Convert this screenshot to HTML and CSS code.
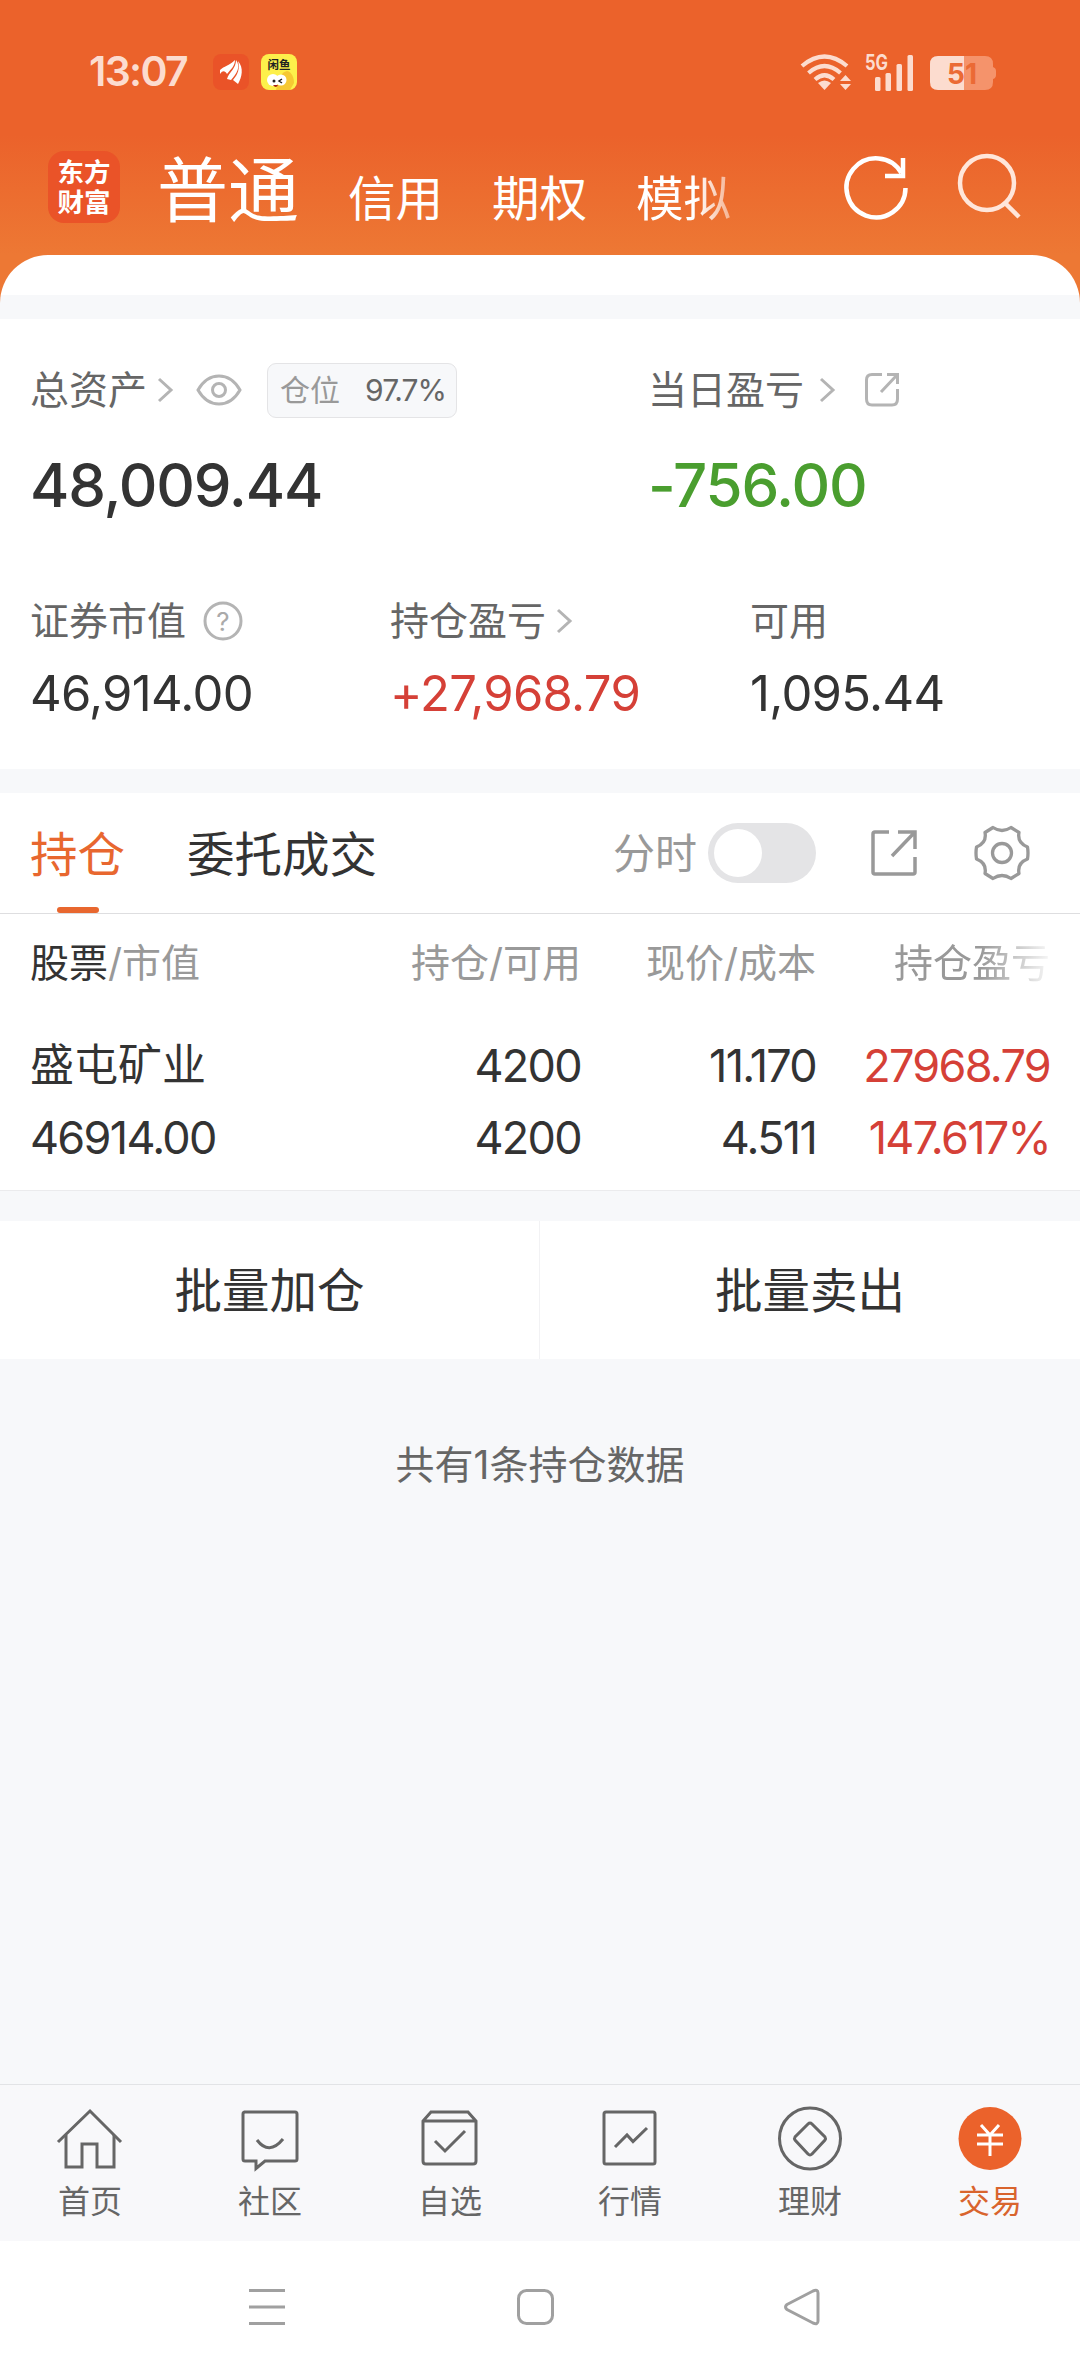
FILE: index.html
```html
<!DOCTYPE html>
<html lang="zh-CN">
<head>
    <meta charset="UTF-8">
    <meta name="viewport" content="width=device-width, initial-scale=1.0">
    <title>交易</title>
    <link rel="stylesheet" href="styles.css">
</head>
<body>
    <header class="top">
        <div class="status">
            <span class="time">13:07</span>
            <svg class="app-icon" width="36" height="36" viewBox="0 0 36 36">
                <rect width="36" height="36" rx="8" fill="#ea5328"/>
                <path d="M7 16C11 12 16 12 22 6C22 12 18 15 14 20C12 17 10 16 7 20Z" fill="#fff"/>
                <path d="M14 25C16 18 23 15 23 6C28 13 24 19 18 26Z" fill="#fff"/>
                <path d="M25 7C31 14 29 23 25 30L20 26C25 20 27 15 25 7Z" fill="#fff"/>
            </svg>
            <svg class="app-icon" width="36" height="36" viewBox="0 0 36 36">
                <rect width="36" height="36" rx="8" fill="#fdf04b"/>
                <path d="M15 36C18 25 20 18 26 17C31 18 33 24 33 29L29 36Z" fill="#f6c833"/>
                <circle cx="12" cy="26" r="6" fill="#fff"/>
                <circle cx="20" cy="26" r="5.500" fill="#fff"/>
                <circle cx="13" cy="27" r="1.500" fill="#222"/>
                <path d="M21 25L18 27L21 29" fill="none" stroke="#222" stroke-width="1.500"/>
                <path d="M12 31H17Q15 35 12 31Z" fill="#a82214"/>
                <text x="6.500" y="14.500" font-size="11.500" font-weight="700" fill="#222">闲鱼</text>
            </svg>
            <div class="status-right">
                <svg width="52" height="36" viewBox="0 0 52 36" fill="none" stroke="#fcdccf">
                    <path d="M2 12Q24.500 -7 47 12M8.500 19Q24.500 5 40.500 19M15 25.500Q24.500 17 34 25.500" stroke-width="4.200"/>
                    <path d="M18 29Q24.500 24 31 29L24.500 36Z" fill="#fcdccf" stroke="none"/>
                    <path d="M40 27L45.500 21L51 27ZM40 30L45.500 36L51 30Z" fill="#fcdccf" stroke="none"/>
                </svg>
                <svg class="signal" width="50" height="38" viewBox="0 0 50 38" fill="#fcdccf">
                    <text class="net" x="0" y="17" textLength="23" lengthAdjust="spacingAndGlyphs">5G</text>
                    <rect x="10" y="24" width="5.500" height="14" rx="1.500"/>
                    <rect x="20.500" y="20" width="5.500" height="18" rx="1.500"/>
                    <rect x="31.500" y="11" width="5.500" height="27" rx="1.500"/>
                    <rect x="42.500" y="2" width="5.500" height="36" rx="1.500"/>
                </svg>
                <svg class="battery" width="67" height="34" viewBox="0 0 67 34">
                    <path d="M34 0H55Q63 0 63 8V11Q66 12 66 15V19Q66 22 63 23V26Q63 34 55 34H34Z" fill="#f5936b"/>
                    <path d="M34 0H8Q0 0 0 8V26Q0 34 8 34H34Z" fill="#fcdccf"/>
                    <text class="level" x="17" y="28" textLength="30" lengthAdjust="spacingAndGlyphs">51</text>
                </svg>
            </div>
        </div>
        <nav class="accounts">
            <div class="logo"><span>东方</span><span>财富</span></div>
            <span class="account active">普通</span>
            <span class="account">信用</span>
            <span class="account">期权</span>
            <span class="account fade">模拟</span>
            <svg class="refresh" width="64" height="64" viewBox="0 0 64 64" fill="none" stroke="#fff" stroke-width="4.500">
                <path d="M61.500 33A29.500 29.500 0 1 1 57.500 18"/>
                <path d="M59 3V21H41"/>
            </svg>
            <svg class="search" width="64" height="68" viewBox="0 0 64 68" fill="none" stroke="#ffe6da" stroke-width="4.500">
                <circle cx="30" cy="30" r="27"/>
                <path d="M48 50L62 64"/>
            </svg>
        </nav>
    </header>

    <main>
        <div class="sheet-top"></div>

        <section class="summary">
            <div class="total">
                <div class="label">
                    总资产
                    <svg class="chevron" width="16" height="26" viewBox="0 0 16 26"><path d="M2 2L14 13L2 24"/></svg>
                    <svg class="eye" width="46" height="32" viewBox="0 0 46 32" fill="none" stroke="#b4b4b4" stroke-width="3">
                        <path d="M2 16Q10 2 23 2T44 16Q36 30 23 30T2 16Z"/>
                        <circle cx="23" cy="16" r="6.500"/>
                    </svg>
                    <span class="badge">仓位<b>97.7%</b></span>
                </div>
                <div class="amount">48,009.44</div>
            </div>
            <div class="total">
                <div class="label">
                    当日盈亏
                    <svg class="chevron day" width="16" height="26" viewBox="0 0 16 26"><path d="M2 2L14 13L2 24"/></svg>
                    <svg class="share-small" width="36" height="36" viewBox="0 0 36 36" fill="none" stroke="#b4b4b4" stroke-width="3">
                        <path d="M18 2.500H8Q2.500 2.500 2.500 8V27Q2.500 33 8 33H28Q33.500 33 33.500 27V17"/>
                        <path d="M23 2.500H33.500V12M33 3L17 20"/>
                    </svg>
                </div>
                <div class="amount green">-756.00</div>
            </div>
        </section>

        <section class="details">
            <div class="detail">
                <div class="label">
                    证券市值
                    <svg class="help" width="40" height="40" viewBox="0 0 40 40">
                        <circle cx="20" cy="20" r="18" fill="none" stroke="#b4b4b4" stroke-width="3"/>
                        <text x="20" y="29.500" text-anchor="middle" font-size="26" fill="#aaa">?</text>
                    </svg>
                </div>
                <div class="value">46,914.00</div>
            </div>
            <div class="detail">
                <div class="label">
                    持仓盈亏
                    <svg class="chevron" width="16" height="26" viewBox="0 0 16 26"><path d="M2 2L14 13L2 24"/></svg>
                </div>
                <div class="value red">+27,968.79</div>
            </div>
            <div class="detail">
                <div class="label">可用</div>
                <div class="value">1,095.44</div>
            </div>
        </section>

        <section class="positions">
            <div class="tabs">
                <span class="tab active">持仓</span>
                <span class="tab">委托成交</span>
                <div class="tools">
                    <span>分时</span>
                    <span class="toggle"></span>
                    <svg class="share" width="48" height="48" viewBox="0 0 48 48" fill="none" stroke="#999" stroke-width="3.500">
                        <path d="M19 3H5Q3 3 3 5V43Q3 45 5 45H43Q45 45 45 43V28"/>
                        <path d="M28 3H45V20M44 4L22 27"/>
                    </svg>
                    <svg class="gear" width="56" height="56" viewBox="0 0 56 56" fill="none" stroke="#999" stroke-width="3.300" stroke-linejoin="round">
                        <path d="M19 2.500Q28 8.500 37 2.500L45 7.500Q43 18 53.500 22Q54.500 28 53.500 34Q43 38 45 48.500L37 53.500Q28 47.500 19 53.500L11 48.500Q13 38 2.500 34Q1.500 28 2.500 22Q13 18 11 7.500Z"/>
                        <circle cx="28" cy="28" r="9.500"/>
                    </svg>
                </div>
            </div>
            <div class="grid head">
                <span><i>股票</i>/市值</span>
                <span>持仓/可用</span>
                <span>现价/成本</span>
                <span class="fade-end">持仓盈亏</span>
            </div>
            <div class="grid row">
                <span class="name">盛屯矿业</span>
                <span>4200</span>
                <span>11.170</span>
                <span class="red">27968.79</span>
            </div>
            <div class="grid row">
                <span>46914.00</span>
                <span>4200</span>
                <span>4.511</span>
                <span class="red">147.617%</span>
            </div>
        </section>

        <div class="actions">
            <button>批量加仓</button>
            <button>批量卖出</button>
        </div>

        <p class="count">共有1条持仓数据</p>
    </main>

    <nav class="tabbar">
        <a class="item">
            <svg width="66" height="66" viewBox="0 0 66 66">
                <path d="M1 35L33 4L64 35"/>
                <path d="M9 28V60H25V37H40V60H57V28"/>
            </svg>
            首页
        </a>
        <a class="item">
            <svg width="66" height="66" viewBox="0 0 66 66">
                <path d="M7 5H58Q60 5 60 7V52Q60 54 58 54H28L19 61.500V54H8Q6 54 6 52V7Q6 5 8 5Z"/>
                <path d="M20 33Q32 49 46 32"/>
            </svg>
            社区
        </a>
        <a class="item">
            <svg width="66" height="66" viewBox="0 0 66 66">
                <path d="M14 5H51L59 14V54Q59 57 56 57H9Q6 57 6 54V14ZM6 14H59"/>
                <path d="M18 34L28 44L48 24"/>
            </svg>
            自选
        </a>
        <a class="item">
            <svg width="66" height="66" viewBox="0 0 66 66">
                <rect x="7" y="5" width="51" height="52" rx="2"/>
                <path d="M18 40L30 28L36 34.500L50 21"/>
            </svg>
            行情
        </a>
        <a class="item">
            <svg width="66" height="66" viewBox="0 0 66 66">
                <circle cx="33" cy="31.500" r="30.500"/>
                <path d="M31 17Q33 15 35 17L48 30Q49 31.500 48 33L35 47Q33 49 31 47L18 33Q17 31.500 18 30Z"/>
            </svg>
            理财
        </a>
        <a class="item current">
            <svg width="66" height="66" viewBox="0 0 66 66">
                <circle class="disc" cx="33" cy="31.500" r="31.500"/>
                <path class="yen" d="M24 18L33 28L42 18M20 28H46M20 37H46M33 28V49"/>
            </svg>
            交易
        </a>
    </nav>

    <footer class="system">
        <svg width="36" height="36" viewBox="0 0 36 36"><path d="M0 1.500H36M0 18H36M0 34.500H36"/></svg>
        <svg class="home" width="38" height="38" viewBox="0 0 38 38"><rect x="1.500" y="2.500" width="34" height="33" rx="8"/></svg>
        <svg width="36" height="38" viewBox="0 0 36 38"><path d="M3 16.500L29 3Q34 1 34 5V33Q34 37 29 35L3 21.500Q0 19 3 16.500Z"/></svg>
    </footer>
</body>
</html>
```
FILE: styles.css
```css
* {
    box-sizing: border-box;
}
body {
    margin: 0;
    width: 1080px;
    height: 2373px;
    display: flex;
    flex-direction: column;
    background: #f7f8fa;
    color: #333;
    font-family: Inter, "Noto Sans CJK SC", sans-serif;
    font-size: 39px;
    font-weight: 400;
    line-height: 1.2;
    overflow: hidden;
}
svg {
    display: block;
    flex: none;
    overflow: visible;
}

/* header */
.top {
    height: 303px;
    flex: none;
    background: linear-gradient(#eb622b 0, #eb622b 135px, #ed7834 255px);
}
.status {
    height: 143px;
    padding: 0 83px 0 89px;
    display: flex;
    align-items: center;
}
.time {
    width: 124px;
    font-size: 41px;
    font-weight: 600;
    letter-spacing: -1.700px;
    color: #fcdccf;
}
.app-icon {
    margin-right: 12px;
}
.status-right {
    display: flex;
    align-items: center;
    margin-left: auto;
}
.signal {
    margin: 0 15px 0 13px;
}
.battery {
    margin-top: 3px;
}
.net {
    font-size: 21px;
    font-weight: 700;
}
.level {
    font-size: 29px;
    font-weight: 700;
    fill: #eb6a35;
}
.accounts {
    height: 88px;
    padding-left: 48px;
    display: flex;
    align-items: center;
    color: #fff;
}
.logo {
    width: 72px;
    height: 72px;
    margin: 0 37px 0 0;
    display: flex;
    flex-direction: column;
    align-items: center;
    justify-content: center;
    border-radius: 16px;
    background: #ea5328;
    font-size: 26.500px;
    font-weight: 700;
    line-height: 30px;
}
.account {
    width: 144px;
    font-size: 47.500px;
    line-height: 60px;
    padding-top: 24px;
    white-space: nowrap;
}
.account.active {
    width: 191px;
    font-size: 71px;
    line-height: 80px;
    padding-top: 5px;
}
.fade {
    -webkit-mask-image: linear-gradient(90deg, #000 60px, transparent 125px);
    mask-image: linear-gradient(90deg, #000 60px, transparent 125px);
}
.refresh {
    margin-left: 64px;
}
.search {
    margin-left: 49px;
}

/* assets */
.sheet-top {
    height: 64px;
    margin-top: -48px;
    border-radius: 48px 48px 0 0;
    background: linear-gradient(#fff 40px, #f7f8fa 40px);
}
.summary {
    display: flex;
    height: 222px;
    padding: 41px 0 0 30px;
    background: #fff;
}
.total:first-child {
    width: 618px;
    flex: none;
}
.label {
    display: flex;
    align-items: center;
    height: 60px;
    color: #666;
    white-space: nowrap;
}
.chevron {
    margin-left: 10px;
    fill: none;
    stroke: #b4b4b4;
    stroke-width: 3;
}
.chevron.day {
    margin-left: 15px;
}
.eye {
    margin-left: 23px;
}
.badge {
    display: flex;
    align-items: center;
    justify-content: space-between;
    width: 190px;
    height: 55px;
    margin-left: 25px;
    padding: 0 10px 0 12px;
    border: 1px solid #e4e4e6;
    border-radius: 9px;
    background: #f7f8fa;
    color: #999;
    font-size: 30px;
}
.badge b {
    color: #666;
    font-weight: 400;
    letter-spacing: -1px;
}
.share-small {
    margin-left: 29px;
}
.amount {
    margin-top: 30px;
    font-size: 60px;
    font-weight: 500;
    line-height: 70px;
    letter-spacing: -1.200px;
}
.details {
    display: flex;
    height: 228px;
    padding: 50px 0 0 30px;
    background: #fff;
}
.detail {
    width: 360px;
    flex: none;
}
.detail:last-child {
    width: auto;
}
.help {
    margin-left: 17px;
}
.value {
    margin-top: 13px;
    font-size: 49px;
    line-height: 60px;
    letter-spacing: -.700px;
}
.green {
    color: #4a9e2f;
}
.red {
    color: #d54037;
}

/* positions */
.positions {
    margin-top: 24px;
    height: 398px;
    border-bottom: 1px solid #ebebed;
    background: #fff;
}
.tabs {
    display: flex;
    height: 121px;
    padding-left: 30px;
    border-bottom: 1px solid #dedee0;
    font-size: 47.500px;
    line-height: 123px;
}
.tab.active {
    width: 157px;
    color: #e8672f;
}
/* short bar under the selected tab */
.tab.active::after {
    content: "";
    display: block;
    width: 42px;
    height: 6px;
    margin: -9px 0 0 27px;
    border-radius: 3px;
    background: #e8672f;
}
.tools {
    display: flex;
    align-items: center;
    margin-left: auto;
    padding-right: 50px;
    color: #999;
    font-size: 42px;
}
.toggle {
    width: 108px;
    height: 60px;
    margin-left: 11px;
    padding: 6px;
    border-radius: 30px;
    background: #e4e4e6;
}
.toggle::before {
    content: "";
    display: block;
    width: 48px;
    height: 48px;
    border-radius: 50%;
    background: #fff;
}
.share {
    margin-left: 54px;
}
.gear {
    margin-left: 56px;
}
.grid {
    display: grid;
    grid-template-columns: 301px 250px 235px 234px;
    padding-left: 30px;
    height: 72px;
    line-height: 73px;
    font-size: 45px;
    letter-spacing: -1.700px;
    text-align: right;
    white-space: nowrap;
}
.grid span:first-child {
    text-align: left;
}
.grid.head {
    height: 115px;
    line-height: 98px;
    font-size: 39px;
    letter-spacing: 0;
    color: #999;
}
.head i {
    font-style: normal;
    color: #333;
}
.grid .name {
    font-size: 44px;
    letter-spacing: 0;
}
.fade-end {
    -webkit-mask-image: linear-gradient(90deg, #000 165px, transparent 240px);
    mask-image: linear-gradient(90deg, #000 165px, transparent 240px);
}
.actions {
    display: flex;
    height: 138px;
    margin-top: 30px;
    background: #fff;
}
.actions button {
    width: 540px;
    padding-bottom: 0;
    border: none;
    background: none;
    color: #333;
    font-family: inherit;
    font-size: 47.500px;
    line-height: 60px;
}
.actions button:first-child {
    border-right: 1px solid #f2f2f4;
}
.count {
    margin: 76px 0 0;
    line-height: 60px;
    text-align: center;
    color: #666;
}

/* bottom tabs */
.tabbar {
    display: flex;
    height: 157px;
    margin-top: auto;
    border-top: 1px solid #e2e3e6;
    background: #f8f8fa;
}
.item {
    width: 180px;
    padding-top: 22px;
    display: flex;
    flex-direction: column;
    align-items: center;
    font-size: 32px;
    line-height: 60px;
    color: #666;
}
.item svg {
    margin-bottom: -1px;
    fill: none;
    stroke: #666;
    stroke-width: 3;
}
.item.current {
    color: #d9642d;
}
.item .disc {
    fill: #eb622b;
    stroke: none;
}
.item .yen {
    stroke: #fff;
}
.system {
    display: flex;
    justify-content: space-between;
    align-items: center;
    flex: none;
    height: 132px;
    padding: 0 260px 0 249px;
    background: #fff;
}
.system svg {
    fill: none;
    stroke: #a0a0a0;
    stroke-width: 3;
}
.system .home {
    margin-left: 3px;
}
```
